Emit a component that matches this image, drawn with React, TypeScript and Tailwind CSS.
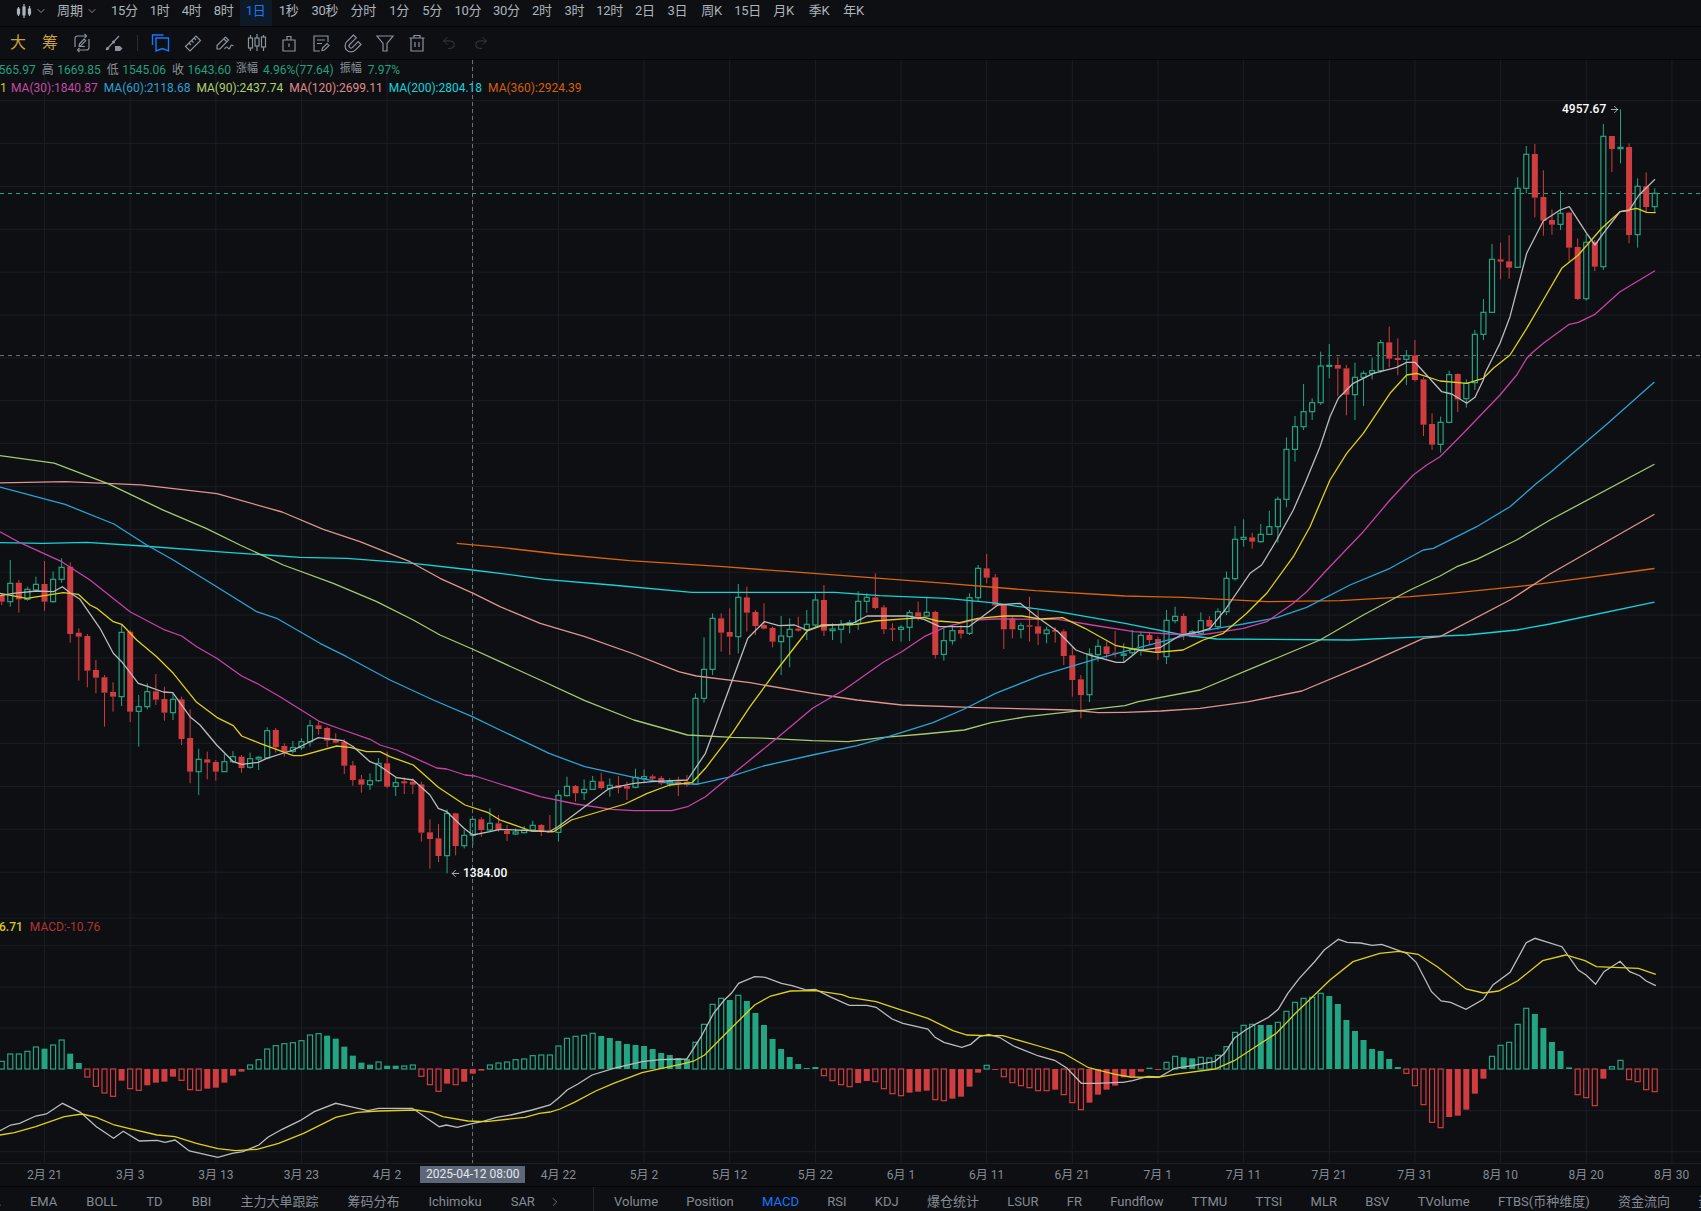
import React from 'react';
import { ArrowLeft, ArrowRight, ChevronDown, ChevronRight, Undo2, Redo2 } from 'lucide-react';

type Pt = [number, number];
type Zone = (x: number, y: number) => Pt;

// crop coordinates -> page coordinates
const zF: Zone = (x, y) => [x / 0.9218, y / 0.9218];
const z6: Zone = (x, y) => [x / 3, 530 + y / 3];
const z8: Zone = (x, y) => [500 + x / 2.24, 530 + y / 3];
const z9: Zone = (x, y) => [1150 + x / 3, 320 + y / 3];
const z5: Zone = (x, y) => [1300 + x / 3, 80 + y / 3];
const z7: Zone = (x, y) => [x / 2.8, 910 + y / 3];
const z11: Zone = (x, y) => [560 + x / 2.8, 920 + y / 3];
const z10: Zone = (x, y) => [1100 + x / 2.609, 920 + y / 3];

const seg = (zone: Zone, vals: number[]) => {
  const out: string[] = [];
  for (let i = 0; i < vals.length; i += 2) {
    const [x, y] = zone(vals[i], vals[i + 1]);
    out.push(`${x.toFixed(1)},${y.toFixed(1)}`);
  }
  return out.join(' ');
};

const candleX = (n: number) => 1.7 + 8.565 * n;

// top, bottom, wick top, wick bottom, 1 = red
const candles6 = [
  [195,215,190,225,1],[160,215,90,230,0],[158,208,150,248,1],[178,208,170,212,0],[163,180,140,185,0],[162,215,93,242,1],[148,215,125,218,0],[112,148,85,158,0],
  [110,312,97,338,1],[308,320,295,452,1],[318,422,312,472,1],[420,443,390,490,1],[442,488,435,590,1],[486,500,457,545,1],[307,500,285,528,0],[305,545,300,576,1],
  [530,544,495,650,0],[485,530,460,538,0],[484,509,432,525,1],[507,548,470,572,1],[508,548,488,570,0],[508,627,500,645,1],[624,725,538,760,1],[688,725,656,795,0],
  [688,698,665,748,1],[696,725,690,752,1],[695,725,672,725,0],[680,695,663,700,0],[680,714,675,728,1],[686,712,668,716,0],[682,687,678,720,0],[602,684,592,688,0],
  [600,652,594,668,1],[648,666,640,680,1],[653,664,633,670,0],[635,653,625,660,0],[587,635,570,650,0],[586,597,575,614,1],[594,632,590,652,1],[630,638,610,640,1],
  [635,707,628,732,1],[706,750,693,767,1],[748,764,735,788,1],[752,764,730,780,0],[700,752,684,755,0],[700,770,665,775,1],[758,769,742,798,0],[754,760,742,792,1],
  [755,764,745,792,1],[763,908,755,935,1],[907,927,868,1016,1],[925,978,882,996,1],[850,977,838,1030,0],[850,948,848,976,1],[916,947,900,955,0],[868,916,868,945,0],
  [868,900,862,920,1],[880,900,835,905,0],[880,900,855,905,1],
];
const candles8 = [
  [902,912,885,933,1],[906,912,895,915,0],[900,908,888,910,0],[886,900,872,905,0],[885,905,882,918,1],[902,908,855,908,1],[796,907,780,935,0],[769,797,740,800,0],
  [768,790,765,815,1],[778,788,748,810,0],[754,778,738,780,0],[754,774,728,778,1],[766,776,745,800,0],[766,774,738,790,1],[768,776,755,810,1],[742,772,716,775,0],
  [740,746,718,760,0],[739,746,733,755,1],[744,760,738,765,1],[755,762,745,770,0],[755,760,740,798,1],[755,765,735,770,1],[505,762,490,765,0],[418,505,322,518,0],
  [265,418,250,435,0],[265,308,250,365,1],[306,320,235,375,1],[202,320,162,370,0],[202,248,170,305,1],[246,288,240,315,1],[285,296,220,298,1],[294,335,290,352,1],
  [318,335,258,435,0],[298,320,265,412,0],[296,302,260,305,1],[283,300,240,330,0],[210,285,192,292,0],[210,302,165,318,1],[297,302,280,330,0],[285,298,270,340,0],
  [278,285,270,310,0],[214,280,184,300,0],[202,214,190,248,0],[202,234,130,238,1],[232,298,225,312,1],[295,299,280,333,1],[292,298,285,335,0],[248,292,240,333,0],
  [247,260,215,272,1],[247,258,200,262,0],[246,375,242,386,1],[332,373,295,392,0],[302,332,285,344,0],[300,311,285,326,1],[203,310,190,315,0],[115,203,105,215,0],
  [115,143,72,160,1],[142,226,132,230,1],[225,298,222,357,1],[265,298,260,325,1],[287,298,278,325,0],[286,290,200,335,1],[289,311,240,345,1],[300,311,290,340,0],
  [300,305,292,338,1],[304,378,298,405,1],[376,450,350,500,1],[448,495,435,565,1],[372,494,355,516,0],[349,374,328,395,0],[349,372,335,385,1],[368,371,303,382,1],
  [372,376,340,395,0],[358,368,300,375,0],[316,358,305,377,0],[315,330,305,345,1],[327,368,320,390,1],[271,380,240,402,0],[259,272,230,280,0],[258,310,250,330,1],
  [305,318,300,322,0],
];
const candles9 = [
  [902,940,877,945,0],[900,920,888,930,1],[875,920,865,930,0],[775,875,755,885,0],[658,776,618,782,0],[652,658,598,680,0],[652,665,638,686,1],[643,665,612,668,0],
  [620,643,572,645,0],[538,620,530,668,0],[388,538,352,562,0],[320,388,288,425,0],[275,320,192,330,0],[248,275,235,300,0],[138,248,95,255,0],[136,139,72,175,0],
  [135,146,112,228,1],[145,224,135,286,1],[172,224,128,300,0],[160,172,152,258,0],[152,160,113,178,0],[68,152,60,158,0],[67,116,20,142,1],[114,120,55,166,1],
  [107,118,90,195,0],[106,180,60,185,1],[178,314,172,348,1],[312,374,280,390,1],[307,373,290,398,0],[164,307,152,310,0],[162,238,160,276,1],[190,236,178,263,0],
  [43,188,30,210,0],
];
const candles5 = [
  [697,763,657,780,0],[538,697,492,698,0],[538,545,488,598,1],[544,563,465,596,1],[325,562,292,563,0],[223,325,198,340,0],[222,353,192,412,1],[351,422,271,467,1],
  [420,434,388,464,1],[400,433,333,450,0],[398,503,395,545,1],[501,657,475,660,1],[487,656,462,662,0],[486,560,480,573,1],[169,560,132,570,0],[168,207,168,276,1],
  [202,206,88,250,0],[201,465,190,490,1],[319,464,295,503,0],[319,381,277,396,1],[340,380,325,398,0],
];

const allCandles = [
  ...candles6.map((c) => ({ c, off: 530 })),
  ...candles8.map((c) => ({ c, off: 530 })),
  ...candles9.map((c) => ({ c, off: 320 })),
  ...candles5.map((c) => ({ c, off: 80 })),
];

const maLines = [
  { color: '#dc640c', points: [
    seg(z6, [1370,40]),
    seg(z8, [0,52,130,72,290,92,500,110,650,125,800,140,1000,160,1200,182,1400,198]),
    seg(z9, [0,830,100,832,220,838,350,845,570,842,780,830,900,820,1100,800,1200,788]),
    seg(zF, [1525,524]),
  ] },
  { color: '#14d4da', points: [
    seg(z6, [0,38,130,40,260,37,430,48,650,65,800,75,900,82,1040,85,1130,92,1240,100,1417,120,1500,130]),
    seg(z8, [100,148,250,165,430,187,750,187,850,197,1000,205,1100,218,1250,245,1400,280]),
    seg(z9, [0,925,100,945,200,957,600,960,830,950,950,945,1100,930,1200,912]),
    seg(zF, [1525,555]),
  ] },
  { color: '#e09490', points: [
    seg(zF, [0,445,60,444,130,447,200,455,260,472,298,488]),
    seg(z6, [1080,35,1230,95,1320,145,1420,190,1500,230]),
    seg(z8, [90,280,190,320,300,372,400,425,440,438,560,458,700,490,800,510,900,525,1070,533,1280,540,1340,548,1400,547,1480,543,1568,535]),
    seg(zF, [1150,647,1200,637,1260,612]),
    seg(z9, [820,955,870,950,1080,840,1200,762]),
    seg(zF, [1525,474]),
  ] },
  { color: '#a6c870', points: [
    seg(zF, [0,420,50,427,100,446,150,470,190,487]),
    seg(z6, [720,45,850,105,1000,160,1130,215,1240,270,1320,315,1417,357,1500,395]),
    seg(z8, [90,450,190,512,300,570,420,615,520,622,600,625,700,632,780,635,860,622,950,612,1040,600,1100,578,1180,560,1300,542,1400,527,1430,515,1568,480]),
    seg(z9, [510,960,640,885,780,810,870,768,920,740,980,718,1100,660,1200,600]),
    seg(zF, [1525,428]),
  ] },
  { color: '#2aa3d6', points: [
    seg(zF, [0,449,60,465,105,483]),
    seg(z6, [440,45,520,90,650,170,770,245,830,265,960,340,1040,380,1170,450,1300,510,1417,560,1500,600]),
    seg(z8, [110,670,190,710,300,742,370,758,440,763,510,742,590,708,700,675,800,647,870,620,970,578,1040,537,1110,490,1210,437,1340,385,1440,350,1568,305]),
    seg(z9, [200,925,280,912,380,893,470,862,600,795,720,745,820,690,850,685,980,620,1080,560,1160,490,1200,458]),
    seg(zF, [1480,392,1525,352]),
  ] },
  { color: '#c842a4', points: [
    seg(z6, [0,5,60,38,185,95,270,150,390,245,490,298,545,318,590,350,650,385,725,438,770,460,840,500,960,575,1030,600,1110,628,1140,645,1190,660,1240,682,1310,714,1340,717,1395,735,1425,738,1500,762]),
    seg(z8, [90,800,170,822,250,838,300,842,385,842,420,830,460,800,510,745,560,690,620,625,700,535,770,480,860,395,900,365,950,320,1000,290,1060,270,1110,267,1250,268,1340,288,1420,305,1500,312,1568,315]),
    seg(z9, [200,938,280,925,350,905,430,850,470,815,530,750,640,635,720,540,790,465,830,435,870,410,940,340,1050,225,1100,165,1130,115]),
    seg(z5, [700,815,730,790,808,733,835,727,885,703,960,635,1065,572]),
  ] },
  { color: '#e0d018', points: [
    seg(z6, [0,190,80,205,190,188,235,193,270,225,290,235,340,275,365,283,410,330,470,380,520,430,590,517,650,562,700,587,725,618,780,640,880,677,905,677,1010,648,1050,652,1100,665,1140,665,1170,680,1240,705,1315,772,1395,825,1465,848,1500,870]),
    seg(z8, [70,903,120,905,160,870,280,822,330,790,380,765,430,758,460,715,520,610,560,530,620,420,690,300,720,285,800,283,840,273,950,262,980,273,1030,278,1070,265,1130,258,1170,258,1210,267,1260,263,1310,295,1380,347,1430,360,1470,367,1530,360,1568,335]),
    seg(z9, [160,960,220,940,290,880,350,820,430,710,480,620,540,480,590,400,640,340,720,220,770,165,800,160,870,183,950,190,1000,175,1030,145,1080,105]),
    seg(z5, [680,745,730,660,785,565,835,525,905,445,960,395,1010,385,1040,397,1067,398]),
  ] },
  { color: '#bcbcbc', points: [
    seg(z6, [0,197,40,190,110,183,160,185,187,170,215,192,240,208,300,295,340,370,365,395,415,460,445,470,490,486,518,488,570,560,600,585,650,645,700,695,725,703,775,697,800,685,880,660,955,623,1030,632,1060,650,1110,695,1135,705,1190,743,1240,750,1290,795,1315,835,1340,845,1392,895,1418,915,1470,905,1500,898]),
    seg(z8, [110,905,130,890,245,775,300,760,340,755,420,750,460,670,515,470,555,325,592,275,625,287,660,285,690,302,720,288,790,280,822,258,915,258,950,268,985,290,1050,290,1115,225,1165,220,1210,268,1250,305,1290,360,1320,375,1380,397,1398,397,1430,362,1480,352,1525,315,1568,305]),
    seg(z9, [180,925,225,870,300,760,335,735,380,660,430,570,465,490,510,380,540,290,565,235,610,190,670,160,740,142,770,127,795,127,875,215,905,222,950,250,975,232,1000,180]),
    seg(z5, [555,880,600,790,630,710,655,615,680,520,730,423,780,390,808,380,860,460,885,495,910,460,960,395,987,392,1017,345,1065,298]),
  ] },
];

const macdBars = (
  '23h 45h 45h 53h 66h 61f 72h 87h 46f 18f -24h -52h -72h -82h -35f -59h -64h -49f -41f -38f -23f -34h -62h -64h -59f -56f -41f -20f -8f ' +
  '12h 28h 60h 70h 76h 79h 85h 102h 106h 100f 91f 67f 40f 19f 13f 21h 10f 10f 9h 12h -22h -47h -67h -44f -47h -38f -14f -5f ' +
  '12h 18h 21h 28h 30h 40h 42h 42h 69h 92h 98h 101h 107h 99f 93f 84f 75f 72f 69f 60f 48f 42f 33f 30f 80h 134h 194h 212h 207f 221h 204f 168f 132f 90f 60f 36f 15f 3f 6f ' +
  '-20h -35h -47h -53h -42f -36f -38h -59h -74h -80h -71f -68f -65f -92h -95h -89f -83f -53f -11f 11h -3f -23h -41h -50h -56h -65h -65h -62f -77h -101h -122h -101f -77f -62f -50f ' +
  '-25f -25f -8f 4f -3f 20h 38h 35f 32f 35h 33h 41h 67h 110h 131h 134h 132f 132f 140h 173h 200h 212h 215h 227h 219f 195f 147f 114f 87f 60f 54f 30f 6f ' +
  '-13h -50h -107h -160h -176h -144f -140f -122f -74f -29f 38h 71h 80h 134h 182h 165f 123f 81f 54f 5f -77h -86h -110h -29f 7h 26h -32h -38h -62h -68h'
).split(' ');

const macdWhite = [
  seg(z7, [0,662,30,645,55,640,100,618,130,612,175,580,225,607,270,650,318,685,345,664,390,693,440,691,462,697,490,690,530,723,610,742,650,730,680,725,725,705,750,682,790,658,840,632,880,605,940,580,990,592,1030,602,1060,595,1155,595,1230,650,1250,645,1280,652,1325,640,1350,635,1390,622,1430,615,1490,600,1540,585,1568,560]),
  seg(z11, [20,510,50,492,90,465,150,445,230,425,280,419,355,417,395,350,430,280,460,240,480,220,500,190,545,170,575,172,620,190,650,197,690,210,715,208,760,232,810,256,860,256,885,262,930,297,960,310,1030,327,1050,352,1075,367,1125,382,1150,373,1175,350,1200,343,1230,352,1270,378,1340,408,1385,421,1420,445,1460,490,1500,490,1568,487]),
  seg(z10, [60,487,85,482,125,469,155,471,195,445,240,437,300,424,325,400,350,355,380,330,410,310,440,292,465,268,490,220,520,175,560,125,585,90,622,58,645,67,680,69,710,76,735,73,800,100,825,127,865,215,890,243,915,247,955,268,1000,238,1025,195,1070,157,1112,68,1135,55,1205,80,1248,150,1268,165,1293,193,1315,155,1357,124,1382,155,1408,167,1425,183,1450,197]),
].join(' ');
const macdYellow = [
  seg(z7, [0,675,40,668,100,650,180,620,230,612,270,622,320,645,360,655,440,675,490,680,550,700,610,716,660,722,720,718,780,700,850,670,940,622,1000,607,1060,603,1165,600,1210,607,1240,620,1310,633,1360,635,1470,622,1510,610,1540,606,1568,597]),
  seg(z11, [40,547,100,513,150,490,230,458,350,430,375,423,405,405,460,345,545,255,590,228,645,213,715,212,790,224,810,232,885,245,950,268,1030,295,1100,332,1140,345,1190,347,1240,347,1340,378,1410,400,1480,443]),
  seg(z10, [40,463,80,471,150,472,195,463,300,447,350,422,460,340,510,280,600,180,660,125,730,100,780,94,830,103,880,140,955,207,1000,219,1040,213,1090,182,1155,122,1215,105,1265,122,1295,140,1340,142,1405,145,1450,163]),
].join(' ');

const GREEN = '#23a583';
const RED = '#cf3d40';
const GRID = '#1b1e23';
const CROSS = '#6a6f78';

const gridXs = Array.from({ length: 20 }, (_, i) => candleX(5 + i * 10));
const priceYs = Array.from({ length: 20 }, (_, i) => 100.7 + i * 42.86);
const macdYs = [918, 945.7, 987, 1028, 1069.3, 1110.7, 1151.7];

const periods = [
  ['15分', 'w-[38.5px]'], ['1时', 'w-[32px]'], ['4时', 'w-[32px]'], ['8时', 'w-[32px]'], ['1日', 'w-[32px]'], ['1秒', 'w-[34px]'],
  ['30秒', 'w-[38.5px]'], ['分时', 'w-[38.5px]'], ['1分', 'w-[33px]'], ['5分', 'w-[33px]'], ['10分', 'w-[38.5px]'], ['30分', 'w-[38.5px]'],
  ['2时', 'w-[32.5px]'], ['3时', 'w-[32.5px]'], ['12时', 'w-[38px]'], ['2日', 'w-[32.5px]'], ['3日', 'w-[32.5px]'], ['周K', 'w-[36px]'],
  ['15日', 'w-[36px]'], ['月K', 'w-[36px]'], ['季K', 'w-[35px]'], ['年K', 'w-[34px]'],
];

const dates = ['2月 21','3月 3','3月 13','3月 23','4月 2','2025-04-12 08:00','4月 22','5月 2','5月 12','5月 22','6月 1','6月 11','6月 21','7月 1','7月 11','7月 21','7月 31','8月 10','8月 20','8月 30'];

const leftTabs = ['EMA','BOLL','TD','BBI','主力大单跟踪','筹码分布','Ichimoku','SAR'];
const rightTabs = ['Volume','Position','MACD','RSI','KDJ','爆仓统计','LSUR','FR','Fundflow','TTMU','TTSI','MLR','BSV','TVolume','FTBS(币种维度)','资金流向','资金费率'];

const Ico: React.FC<{ children: React.ReactNode; color?: string }> = ({ children, color = '#8b929c' }) => (
  <svg width="20" height="20" viewBox="0 0 20 20" fill="none" stroke={color} strokeWidth="1.2">
    {children}
  </svg>
);

const toolIcons = [
  <Ico key="draw">
    <path d="M14 3H5.500A2.500 2.500 0 0 0 3 5.500V14M6 17h8.500a2.500 2.500 0 0 0 2.500-2.500V6" />
    <path d="M12.500 1l2 2-2 2M7.500 15l-2 2 2 2" />
    <path d="M7 13.500h6M7.500 11l4.500-5 1.700 1.600-4.600 4.900-2 .4z" />
  </Ico>,
  <Ico key="line">
    <path d="M2 17L15 3" />
    <circle cx="3.500" cy="15.500" r="1" fill="#8b929c" />
    <circle cx="9.500" cy="9" r="1" fill="#8b929c" />
    <path d="M11 13h5l2.500 2.500L16 18h-5z" fill="#8b929c" stroke="none" />
  </Ico>,
];

const tools2 = [
  <Ico key="ruler">
    <path d="M2.500 13.500L13 3l4.500 4.500L7 18z" />
    <path d="M6 10l2 2M8.500 7.500l2 2M11 5l2 2" />
  </Ico>,
  <Ico key="pen">
    <path d="M2 16v-3.500L10.500 4l3 3L5 16z" />
    <path d="M9 6l3 3" />
    <path d="M9.500 16c1.500-2.500 2.500-2.500 3.500-1s1.500 1 2.500-1.500 2-1 3-.5" />
  </Ico>,
  <Ico key="candles">
    <path d="M3.500 2v3M3.500 15v3M10 1v4M10 13v5M16.500 2v2M16.500 14v4" />
    <rect x="1.500" y="5" width="4" height="10" />
    <rect x="8" y="5" width="4" height="8" />
    <rect x="14.500" y="4" width="4" height="10" />
  </Ico>,
  <Ico key="box">
    <path d="M4 7h12v11H4zM8 7V3.500h4V7M10 10.500v3.500" />
  </Ico>,
  <Ico key="note">
    <path d="M17 9V3H3v15h6" />
    <path d="M6 7h8M6 10.500h5M11 17.500l.5-2.500 4.500-4.500 2 2-4.500 4.500z" />
  </Ico>,
  <Ico key="magnet">
    <path d="M10.500 2L3.800 8.700A6 6 0 0 0 12.300 17.200L18 11.500L15.200 8.700L9.500 14.400A2 2 0 0 1 6.600 11.500L13.300 4.800Z" />
  </Ico>,
  <Ico key="filter">
    <path d="M2 3h16l-6 7.500V18h-4v-7.500z" />
  </Ico>,
  <Ico key="trash">
    <path d="M2.500 5h15M7 5V2.500h6V5M4 5v13h12V5M8 9v5M12 9v5" />
  </Ico>,
];

const App: React.FC = () => {
  return (
    <div className="flex h-[1211px] w-[1701px] flex-col overflow-hidden bg-[#0d0f12] font-[family-name:Roboto,'Noto_Sans_CJK_SC',sans-serif] text-[#9aa0a8]">
      <div className="flex h-[27px] shrink-0 items-center border-b border-[#050607] text-[13px] tracking-[-0.3px] text-[#aeb4bc]">
        <svg className="mb-[4px] ml-[16px]" width="16" height="16" viewBox="0 0 16 16" fill="none" stroke="#aeb4bc" strokeWidth="1.200">
          <path d="M2.500 4v9M8 1v14M13.500 3v10" />
          <path d="M1.500 6h2v5h-2zM7 4h2v8H7zM12.500 6h2v5h-2z" fill="#aeb4bc" />
        </svg>
        <ChevronDown className="mb-[4px] ml-[3px]" size={12} strokeWidth={1.500} />
        <span className="mb-[4px] ml-[10px] tracking-normal">周期</span>
        <ChevronDown className="mb-[4px] ml-[3px]" size={12} strokeWidth={1.500} />
        <div className="ml-[7px] flex h-full items-center">
          {periods.map(([label, width]) => (
            <span
              key={label}
              className={`flex h-full shrink-0 items-center justify-center pb-[4px] ${width} ${label === '1日' ? 'bg-[#0e1a28] text-[#1677ff]' : ''}`}
            >
              {label}
            </span>
          ))}
        </div>
      </div>

      <div className="flex h-[33px] shrink-0 items-center border-b border-[#050607] pl-[2px]">
        <span className="flex w-[32px] justify-center text-[16px] text-[#c9a13f]">大</span>
        <span className="flex w-[32px] justify-center text-[16px] text-[#c9a13f]">筹</span>
        {toolIcons.map((icon, i) => (
          <span key={i} className="flex w-[32px] justify-center">{icon}</span>
        ))}
        <span className="ml-[7px] mr-[7px] h-[16px] w-px bg-[#2a2d33]" />
        <span className="flex w-[32px] justify-center">
          <Ico color="#1677ff">
            <path d="M1.500 12V2h11" strokeWidth="1.400" />
            <path d="M5 5h12.500v13l-6-2.500L5 18z" strokeWidth="1.400" />
          </Ico>
        </span>
        {tools2.map((icon, i) => (
          <span key={i} className="flex w-[32px] justify-center">{icon}</span>
        ))}
        <span className="flex w-[32px] justify-center text-[#3d4148]"><Undo2 size={16} strokeWidth={1.300} /></span>
        <span className="flex w-[32px] justify-center text-[#3d4148]"><Redo2 size={16} strokeWidth={1.300} /></span>
      </div>

      <div className="relative h-[855px] shrink-0">
        <svg className="block" width="1701" height="855" viewBox="0 60 1701 855">
          {gridXs.map((x) => (
            <line key={x} x1={x} x2={x} y1={60} y2={915} stroke={GRID} />
          ))}
          {priceYs.map((y) => (
            <line key={y} x1={0} x2={1701} y1={y} y2={y} stroke={GRID} />
          ))}
          <line x1={0} x2={1701} y1={193.5} y2={193.5} stroke="#2aa583" strokeDasharray="4 4" />
          <line x1={0} x2={1701} y1={355.5} y2={355.5} stroke={CROSS} strokeDasharray="4 4" />
          <line x1={472.5} x2={472.5} y1={60} y2={915} stroke={CROSS} strokeDasharray="4 3" />
          {allCandles.map(({ c, off }, n) => {
            const [top, bot, wt, wb, red] = c;
            const x = candleX(n);
            const y1 = off + top / 3;
            const y2 = off + bot / 3;
            const color = red ? RED : GREEN;
            return (
              <g key={n}>
                <line x1={x} x2={x} y1={off + wt / 3} y2={y1} stroke={color} />
                <line x1={x} x2={x} y1={y2} y2={off + wb / 3} stroke={color} />
                {red ? (
                  <rect x={x - 3} y={y1} width={6} height={y2 - y1} fill={color} />
                ) : (
                  <rect x={x - 2.500} y={y1} width={5} height={y2 - y1} fill="none" stroke={color} strokeWidth="1.200" />
                )}
              </g>
            );
          })}
          {maLines.map((ma) => (
            <polyline key={ma.color} points={ma.points.join(' ')} fill="none" stroke={ma.color} strokeWidth="1.300" strokeLinejoin="round" />
          ))}
        </svg>

        <div className="absolute left-0 top-[1px] flex h-[17px] items-center whitespace-nowrap text-[12px] text-[#8d939b]">
          <span className="-ml-[8px] text-[#23a07f]">1565.97</span>
          <span className="ml-[6px]">高</span>
          <span className="ml-[3.500px] text-[#23a07f]">1669.85</span>
          <span className="ml-[6px]">低</span>
          <span className="ml-[3.500px] text-[#23a07f]">1545.06</span>
          <span className="ml-[6px]">收</span>
          <span className="ml-[3.500px] text-[#23a07f]">1643.60</span>
          <span className="ml-[5px] text-[11px]">涨幅</span>
          <span className="ml-[5px] text-[#23a07f]">4.96%(77.64)</span>
          <span className="ml-[6px] text-[11px]">振幅</span>
          <span className="ml-[6px] text-[#23a07f]">7.97%</span>
        </div>
        <div className="absolute left-0 top-[19px] flex h-[17px] items-center gap-[6px] whitespace-nowrap text-[12px]">
          <span className="w-[5px] overflow-hidden text-[#d8c91c]">1</span>
          <span className="text-[#c44ba5]">MA(30):1840.87</span>
          <span className="text-[#2e9fd1]">MA(60):2118.68</span>
          <span className="text-[#b0cf72]">MA(90):2437.74</span>
          <span className="text-[#e08a8a]">MA(120):2699.11</span>
          <span className="text-[#10d4dc]">MA(200):2804.18</span>
          <span className="text-[#d85f0a]">MA(360):2924.39</span>
        </div>

        <div className="absolute left-[1562px] top-[41px] flex items-center gap-[3px] text-[12px] font-medium leading-[16px] text-white">
          <span>4957.67</span>
          <ArrowRight size={11} strokeWidth={1.600} className="text-[#dfe2e6]" />
        </div>
        <div className="absolute left-[450px] top-[805px] flex items-center gap-[2px] text-[12px] font-medium leading-[16px] text-white">
          <ArrowLeft size={11} strokeWidth={1.600} className="text-[#dfe2e6]" />
          <span>1384.00</span>
        </div>
      </div>

      <div className="relative h-[248px] shrink-0">
        <svg className="block" width="1701" height="248" viewBox="0 915 1701 248">
          {gridXs.map((x) => (
            <line key={x} x1={x} x2={x} y1={915} y2={1163} stroke={GRID} />
          ))}
          {macdYs.map((y) => (
            <line key={y} x1={0} x2={1701} y1={y} y2={y} stroke={GRID} />
          ))}
          <line x1={472.5} x2={472.5} y1={915} y2={1163} stroke={CROSS} strokeDasharray="4 3" />
          {macdBars.map((bar, n) => {
            const v = parseFloat(bar) / 3;
            const hollow = bar.endsWith('h');
            const x = candleX(n);
            const up = v > 0;
            const color = up ? GREEN : RED;
            const top = up ? 1069 - v : 1069;
            const h = Math.abs(v);
            return hollow ? (
              <rect key={n} x={x - 2.500} y={top} width={5} height={h} fill="none" stroke={color} strokeWidth="1.200" />
            ) : (
              <rect key={n} x={x - 3} y={top} width={6} height={h} fill={color} />
            );
          })}
          <polyline points={macdWhite} fill="none" stroke="#bcbcbc" strokeWidth="1.300" />
          <polyline points={macdYellow} fill="none" stroke="#e0d018" strokeWidth="1.300" />
        </svg>
        <div className="absolute left-0 top-[3px] flex h-[17px] items-center gap-[7px] whitespace-nowrap text-[12px]">
          <span className="-ml-[1px] font-medium text-[#d8c91c]">6.71</span>
          <span className="text-[#b03434]">MACD:-10.76</span>
        </div>
      </div>

      <div className="flex h-[23px] shrink-0 items-center border-t border-[#1b1e23] pb-[1px] pl-[1.700px] text-[12px] text-[#858b94]">
        {dates.map((d) => (
          <div key={d} className="flex w-[85.650px] shrink-0 justify-center">
            {d.startsWith('2025') ? (
              <span className="whitespace-nowrap bg-[#5d6778] px-[6px] py-px leading-[15px] text-[#e4e7eb]">{d}</span>
            ) : (
              <span className="whitespace-nowrap">{d}</span>
            )}
          </div>
        ))}
      </div>

      <div className="flex h-[25px] shrink-0 overflow-hidden whitespace-nowrap border-t border-[#050607] text-[13px] text-[#858b94]">
        <div className="flex w-[593px] shrink-0 items-center gap-[29px] overflow-hidden pt-[6px]">
          <span className="-ml-[19px] text-[#1677ff]">MA</span>
          {leftTabs.map((t) => (
            <span key={t}>{t}</span>
          ))}
          <ChevronRight className="-ml-[16px] shrink-0" size={14} strokeWidth={1.300} />
        </div>
        <div className="w-px shrink-0 bg-[#24272c]" />
        <div className="ml-[20px] flex items-center gap-[28.300px] pt-[6px]">
          {rightTabs.map((t) => (
            <span key={t} className={t === 'MACD' ? 'text-[#1677ff]' : ''}>{t}</span>
          ))}
        </div>
      </div>
    </div>
  );
};

export default App;
